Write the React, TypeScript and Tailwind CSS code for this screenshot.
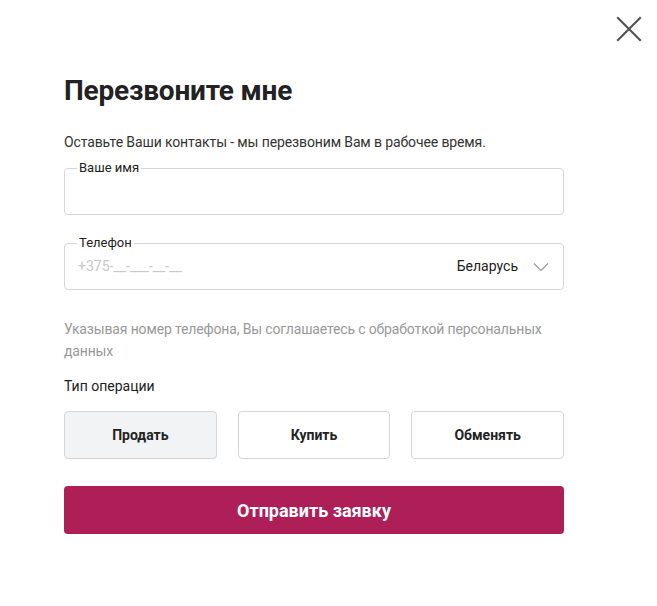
import { useState } from 'react'

const ops = ['Продать', 'Купить', 'Обменять']

export default function App() {
  const [op, setOp] = useState('Продать')

  return (
    <div className="relative w-[657px] h-[606px] bg-white" style={{ fontFamily: 'Roboto, "Noto Sans", sans-serif' }}>
      <button type="button" aria-label="Закрыть" className="absolute right-[14px] top-[15px] h-7 w-7 flex items-center justify-center">
        <svg width="28" height="28" viewBox="0 0 28 28" fill="none" stroke="#555" strokeWidth="2.2" strokeLinecap="square">
          <path d="M3 3 L25 25 M25 3 L3 25" />
        </svg>
      </button>

      <div className="w-[500px] ml-[64px] pt-[74px]">
        <h2 className="text-[28px] leading-[34px] font-bold text-[#222] tracking-[-0.2px]">Перезвоните мне</h2>
        <p className="mt-[24px] text-[14px] leading-[20px] text-[#333] tracking-[-0.12px]">
          Оставьте Ваши контакты - мы перезвоним Вам в рабочее время.
        </p>

        <fieldset className="mt-[8px] h-[55px] border border-[#d6d6d6] rounded-[4px] px-[12px]">
          <legend className="px-[2px] text-[13px] leading-[16px] text-[#222]">Ваше имя</legend>
          <input className="w-full h-[30px] outline-none text-[14px] text-[#222] px-[2px]" />
        </fieldset>

        <fieldset className="mt-[20px] h-[55px] border border-[#d6d6d6] rounded-[4px] px-[12px]">
          <legend className="px-[2px] text-[13px] leading-[16px] text-[#222]">Телефон</legend>
          <div className="flex items-center h-[31px]">
            <input placeholder="+375-__-___-__-__" className="flex-1 outline-none text-[14px] text-[#222] px-[1px] placeholder:text-[#c8c8c8]" />
            <span className="text-[14px] text-[#222]">Беларусь</span>
            <svg className="ml-[15px] mr-[2px]" width="16" height="10" viewBox="0 0 16 10" fill="none" stroke="#999" strokeWidth="1.2">
              <path d="M1 1.5 L8 8.5 L15 1.5" />
            </svg>
          </div>
        </fieldset>

        <p className="mt-[28px] text-[14px] leading-[22px] text-[#999] tracking-[-0.15px]">
          Указывая номер телефона, Вы соглашаетесь с обработкой персональных данных
        </p>
        <p className="mt-[14px] text-[14px] leading-[20px] text-[#222]">Тип операции</p>

        <div className="mt-[15px] grid grid-cols-3 gap-[21px]">
          {ops.map(o => (
            <button key={o} type="button" onClick={() => setOp(o)}
              className={`h-[48px] rounded-[4px] border border-[#d6d6d6] text-[14px] font-bold text-[#222] ${op === o ? 'bg-[#f2f3f5]' : 'bg-white'}`}>
              {o}
            </button>
          ))}
        </div>

        <button type="button" className="mt-[27px] w-full h-[48px] rounded-[4px] bg-[#ae1f57] text-white text-[18px] font-bold">
          Отправить заявку
        </button>
      </div>
    </div>
  )
}
